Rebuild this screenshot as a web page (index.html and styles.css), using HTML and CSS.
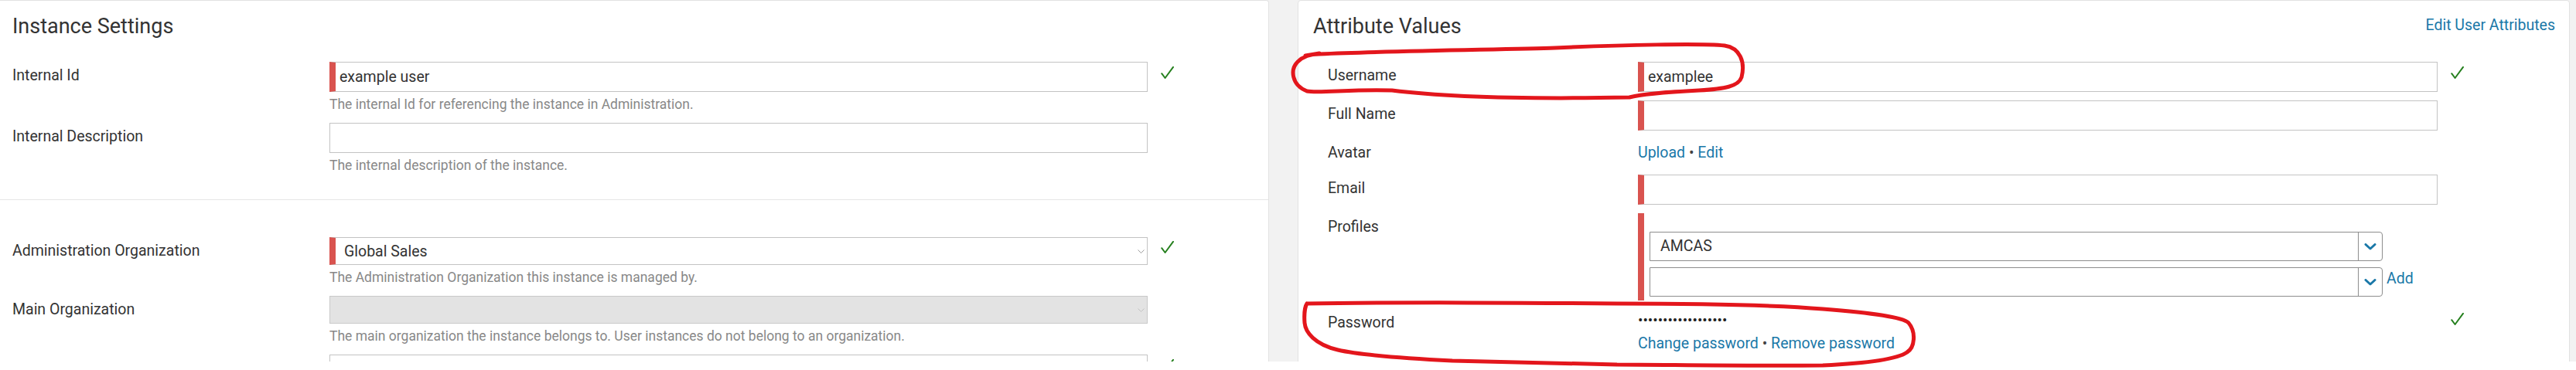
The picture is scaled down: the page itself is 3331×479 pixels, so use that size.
FILE: index.html
```html
<!DOCTYPE html>
<html lang="en">
<head>
<meta charset="utf-8">
<title>Instance Settings</title>
<link rel="stylesheet" href="styles.css">
</head>
<body>
<div class="shot">
  <div class="page">
    <section class="panel panel-left">
      <h2 class="panel-title">Instance Settings</h2>
      <div class="section">
        <div class="row">
          <div class="lbl">Internal Id</div>
          <div class="ctl">
            <div class="input req">example user</div>
            <div class="help">The internal Id for referencing the instance in Administration.</div>
          </div>
          <div class="ok"><svg viewBox="0 0 17 16" width="17" height="16"><path d="M1.2 9.2 L5.6 15 L16 0.8" /></svg></div>
        </div>
        <div class="row">
          <div class="lbl">Internal Description</div>
          <div class="ctl">
            <div class="input"></div>
            <div class="help">The internal description of the instance.</div>
          </div>
          <div class="ok"></div>
        </div>
      </div>
      <div class="section section-sep">
        <div class="row">
          <div class="lbl">Administration Organization</div>
          <div class="ctl">
            <div class="select req"><span>Global Sales</span><svg class="chev" viewBox="0 0 9 5" width="9" height="5"><path d="M0.5 0.5 L4.5 4.5 L8.5 0.5" /></svg></div>
            <div class="help">The Administration Organization this instance is managed by.</div>
          </div>
          <div class="ok ok-sel"><svg viewBox="0 0 17 16" width="17" height="16"><path d="M1.2 9.2 L5.6 15 L16 0.8" /></svg></div>
        </div>
        <div class="row">
          <div class="lbl">Main Organization</div>
          <div class="ctl">
            <div class="select disabled"><span></span><svg class="chev" viewBox="0 0 9 5" width="9" height="5"><path d="M0.5 0.5 L4.5 4.5 L8.5 0.5" /></svg></div>
            <div class="help">The main organization the instance belongs to. User instances do not belong to an organization.</div>
          </div>
          <div class="ok"></div>
        </div>
        <div class="row">
          <div class="lbl"></div>
          <div class="ctl">
            <div class="input"></div>
          </div>
          <div class="ok"><svg viewBox="0 0 17 16" width="17" height="16"><path d="M1.2 9.2 L5.6 15 L16 0.8" /></svg></div>
        </div>
      </div>
    </section>

    <section class="panel panel-right">
      <div class="panel-head">
        <h2 class="panel-title">Attribute Values</h2>
        <a class="link head-link" href="#">Edit User Attributes</a>
      </div>
      <div class="attrs">
        <div class="arow">
          <div class="lbl">Username</div>
          <div class="actl"><div class="input req">examplee</div></div>
          <div class="ok"><svg viewBox="0 0 17 16" width="17" height="16"><path d="M1.2 9.2 L5.6 15 L16 0.8" /></svg></div>
        </div>
        <div class="arow">
          <div class="lbl">Full Name</div>
          <div class="actl"><div class="input req"></div></div>
          <div class="ok"></div>
        </div>
        <div class="arow arow-avatar">
          <div class="lbl">Avatar</div>
          <div class="actl links"><a class="link" href="#">Upload</a> <span class="dot">•</span> <a class="link" href="#">Edit</a></div>
          <div class="ok"></div>
        </div>
        <div class="arow">
          <div class="lbl">Email</div>
          <div class="actl"><div class="input req"></div></div>
          <div class="ok"></div>
        </div>
        <div class="arow">
          <div class="lbl">Profiles</div>
          <div class="actl">
            <div class="profiles">
              <div class="prow">
                <div class="combo"><span class="combo-text">AMCAS</span><span class="combo-btn"><svg viewBox="0 0 16 9" width="16" height="9"><path d="M2 1.5 L8 7 L14 1.5" /></svg></span></div>
              </div>
              <div class="prow">
                <div class="combo"><span class="combo-text"></span><span class="combo-btn"><svg viewBox="0 0 16 9" width="16" height="9"><path d="M2 1.5 L8 7 L14 1.5" /></svg></span></div>
                <a class="link add" href="#">Add</a>
              </div>
            </div>
          </div>
          <div class="ok"></div>
        </div>
        <div class="arow">
          <div class="lbl">Password</div>
          <div class="actl pw">
            <div class="dots">••••••••••••••••••</div>
            <div class="links pw-links"><a class="link" href="#">Change password</a> <span class="dot">•</span> <a class="link" href="#">Remove password</a></div>
          </div>
          <div class="ok ok-pw"><svg viewBox="0 0 17 16" width="17" height="16"><path d="M1.2 9.2 L5.6 15 L16 0.8" /></svg></div>
        </div>
      </div>
    </section>
  </div>

  <svg class="annot" viewBox="0 0 3331 479" width="3331" height="479">
    <path d="M1706 70 C1800 66 1950 64 2011 62 C2100 58 2200 56 2230 59 C2250 62 2257 80 2252 100 C2248 112 2230 115 2197 117 C2160 119 2125 121 2107 126 C2000 128 1880 127 1800 117 C1750 115 1705 121 1690 118 C1670 110 1668 90 1678 80 C1685 73 1695 70 1706 70 M1706 69 L1688 72" />
    <path d="M1690 393 C1800 391 2000 392 2091 393 C2200 393 2300 395 2357 400 C2420 405 2460 410 2468 418 C2478 430 2476 450 2466 456 C2455 464 2420 470 2357 473 C2250 474 2150 472 2091 472 C2000 470 1920 468 1878 467 C1820 464 1760 460 1730 453 C1700 446 1688 430 1687 418 C1686 405 1688 396 1690 393" />
  </svg>
</div>
</body>
</html>
```

FILE: styles.css
```css
* { box-sizing: border-box; }

html, body {
  margin: 0;
  padding: 0;
  background: #ffffff;
}

body {
  font-family: Roboto, "Liberation Sans", sans-serif;
  color: #333333;
}

.shot {
  position: relative;
  width: 3331px;
  height: 479px;
  overflow: hidden;
}

.page {
  display: flex;
  gap: 37px;
  width: 3331px;
  height: 468px;
  overflow: hidden;
  background: #f2f2f2;
}

.panel {
  flex: none;
  height: 540px;
  background: #ffffff;
  border: 1px solid #e2e2e2;
  border-radius: 4px;
}

.panel-left {
  width: 1641px;
  border-left: 0;
  border-top-left-radius: 0;
  border-bottom-left-radius: 0;
  padding-top: 18px;
}

.panel-right {
  width: 1645px;
  padding: 18px 18px 0 19px;
}

.panel-title {
  margin: 0;
  font-size: 27px;
  line-height: 30px;
  font-weight: 400;
  color: #333333;
}

.panel-left .panel-title {
  padding-left: 16px;
}

.panel-head {
  display: flex;
  justify-content: space-between;
  align-items: flex-start;
}

.link {
  color: #1a78a8;
  text-decoration: none;
}

.head-link {
  font-size: 19.5px;
  line-height: 24px;
  margin-top: 2px;
}

/* left panel sections */
.section {
  display: flex;
  flex-direction: column;
  gap: 12px;
  padding: 31px 0 32px 16px;
}

.section-sep {
  border-top: 1px solid #e6e6e6;
  padding-top: 48px;
}

.row {
  display: grid;
  grid-template-columns: 410px 1058px 34px;
  align-items: start;
}

.lbl {
  padding-top: 5.5px;
  font-size: 19.5px;
  line-height: 24px;
  color: #333333;
}

.ctl {
  display: flex;
  flex-direction: column;
}

.input {
  height: 39px;
  border: 1px solid #c3c3c3;
  padding-left: 12px;
  font-size: 19.5px;
  line-height: 37px;
  color: #333333;
  background: #ffffff;
}

.input.req {
  border-left: 8px solid #d9534f;
  padding-left: 5px;
}

.select {
  height: 36px;
  border: 1px solid #c3c3c3;
  display: flex;
  align-items: center;
  justify-content: space-between;
  padding: 0 3px 0 11px;
  font-size: 19.5px;
  color: #333333;
  background: #ffffff;
}

.select.req {
  border-left: 8px solid #d9534f;
}

.select.disabled {
  background: #e3e3e3;
  border-color: #c9c9c9;
}

.chev {
  flex: none;
  fill: none;
  stroke: #9a9a9a;
  stroke-width: 1;
}

.select.disabled .chev {
  stroke: #c2c2c2;
}

.help {
  margin-top: 4px;
  font-size: 17.5px;
  line-height: 24px;
  color: #888888;
}

.ok {
  padding: 6px 0 0 17px;
  height: 24px;
}

.ok svg {
  display: block;
  fill: none;
  stroke: #26801f;
  stroke-width: 2;
  stroke-linecap: round;
  stroke-linejoin: round;
}

.ok-sel { padding-top: 5px; }
.ok-pw { padding-top: 5px; }

/* right panel attribute rows */
.attrs {
  display: flex;
  flex-direction: column;
  gap: 11px;
  margin-top: 31px;
  padding-left: 19px;
}

.arow {
  display: grid;
  grid-template-columns: 401px 1034px 34px;
  align-items: start;
}

.arow-avatar {
  height: 35px;
}

.links {
  font-size: 19.5px;
  line-height: 24px;
  color: #333333;
}

.actl.links {
  padding-top: 5.5px;
}

.dot {
  color: #444444;
}

.profiles {
  border-left: 8px solid #d9534f;
  padding: 24px 0 5px 7px;
  display: flex;
  flex-direction: column;
  gap: 8px;
}

.prow {
  display: flex;
  align-items: flex-start;
}

.combo {
  width: 948px;
  height: 38px;
  border: 1px solid #8d8d8d;
  border-radius: 0 4px 4px 0;
  display: flex;
  align-items: stretch;
  background: #ffffff;
}

.combo-text {
  flex: 1;
  padding-left: 13px;
  font-size: 19.5px;
  line-height: 36px;
  color: #333333;
}

.combo-btn {
  width: 31px;
  border-left: 1px solid #8d8d8d;
  display: flex;
  align-items: center;
  justify-content: center;
}

.combo-btn svg {
  display: block;
  fill: none;
  stroke: #1a78a8;
  stroke-width: 3;
  stroke-linecap: round;
  stroke-linejoin: round;
}

.add {
  margin-left: 5px;
  padding-top: 3px;
  font-size: 19.5px;
  line-height: 24px;
}

.pw {
  padding-top: 3px;
}

.dots {
  font-size: 19px;
  line-height: 24px;
  color: #222222;
}

.pw-links {
  margin-top: 6px;
}

.annot {
  position: absolute;
  left: 0;
  top: 0;
  pointer-events: none;
  fill: none;
  stroke: #e3161c;
  stroke-width: 5;
  stroke-linecap: round;
  stroke-linejoin: round;
}
```
